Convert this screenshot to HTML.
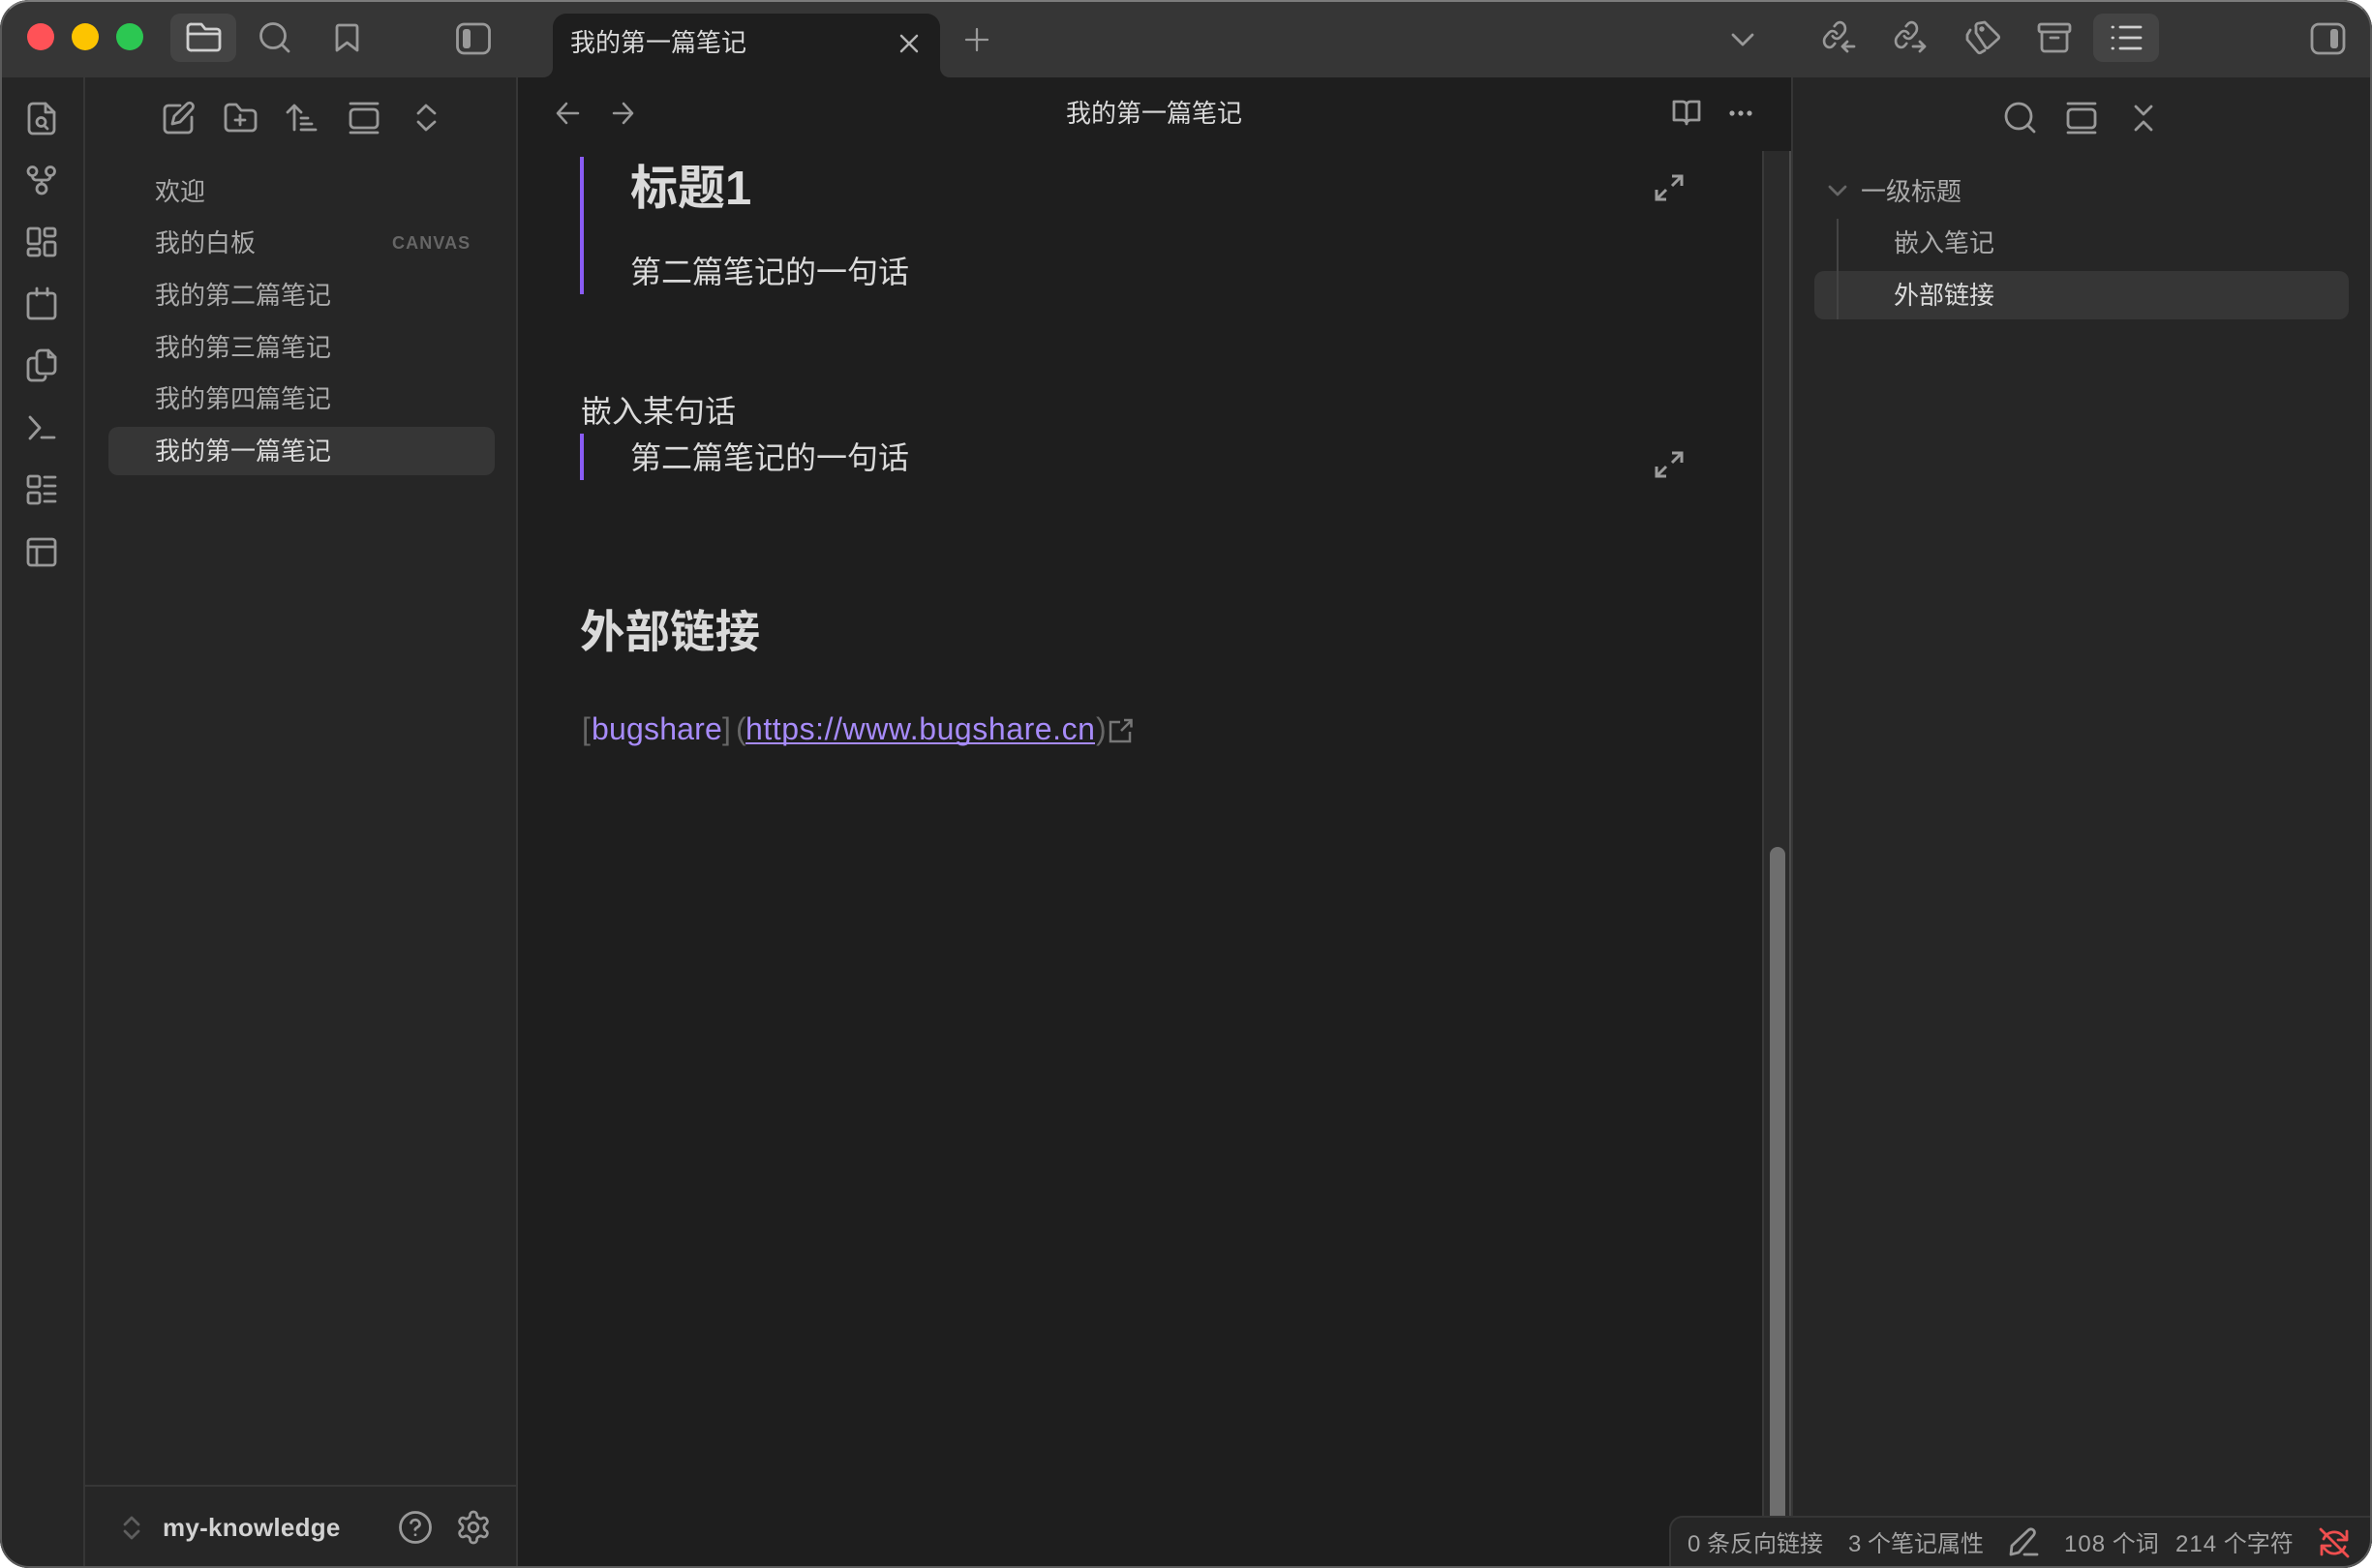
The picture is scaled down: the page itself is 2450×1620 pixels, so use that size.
<!DOCTYPE html>
<html lang="zh-CN">
<head>
<meta charset="utf-8">
<title>我的第一篇笔记</title>
<style>
html,body{margin:0;padding:0;width:2450px;height:1620px;background:#fff;overflow:hidden}
*{box-sizing:border-box}
.win{position:absolute;left:0;top:0;width:2450px;height:1620px;border-radius:30px;overflow:hidden;background:#1e1e1e;font-family:"Liberation Sans","Noto Sans CJK SC",sans-serif}
.b{position:absolute}
.t{position:absolute;white-space:nowrap;line-height:40px;height:40px;font-size:26px;color:#ababab}
.c{font-size:32px;color:#dadada}
.s{font-size:24px;color:#a3a3a3}
.s span{letter-spacing:1px}
.edge{position:absolute;left:0;top:0;width:2450px;height:1620px;border-radius:30px;border:2px solid #5a5a5a;border-top-color:#7c7c7c;pointer-events:none}
svg{position:absolute;left:0;top:0}
.ns *{vector-effect:non-scaling-stroke}
</style>
</head>
<body>
<div class="win">
  <!-- backgrounds -->
  <div class="b" style="left:0;top:0;width:2450px;height:80px;background:#363636"></div>
  <div class="b" style="left:0;top:80px;width:86px;height:1540px;background:#262626"></div>
  <div class="b" style="left:86px;top:80px;width:2px;height:1540px;background:#363636"></div>
  <div class="b" style="left:88px;top:80px;width:445px;height:1540px;background:#262626"></div>
  <div class="b" style="left:533px;top:80px;width:2px;height:1540px;background:#363636"></div>
  <div class="b" style="left:88px;top:1534px;width:445px;height:2px;background:#363636"></div>
  <div class="b" style="left:1850px;top:80px;width:600px;height:1540px;background:#262626"></div>
  <div class="b" style="left:1850px;top:80px;width:2px;height:1540px;background:#363636"></div>
  <!-- tab -->
  <div class="b" style="left:571px;top:14px;width:400px;height:66px;background:#1e1e1e;border-radius:14px 14px 0 0"></div>
  <!-- toolbar active buttons -->
  <div class="b" style="left:176px;top:14px;width:68px;height:50px;background:#444;border-radius:10px"></div>
  <div class="b" style="left:2162px;top:14px;width:68px;height:50px;background:#444;border-radius:10px"></div>
  <!-- traffic lights -->
  <div class="b" style="left:28px;top:24px;width:28px;height:28px;border-radius:50%;background:#ff5257"></div>
  <div class="b" style="left:74px;top:24px;width:28px;height:28px;border-radius:50%;background:#fdc400"></div>
  <div class="b" style="left:120px;top:24px;width:28px;height:28px;border-radius:50%;background:#2cc752"></div>
  <!-- scrollbar -->
  <div class="b" style="left:1820px;top:156px;width:2px;height:1464px;background:#3a3a3a"></div>
  <div class="b" style="left:1822px;top:156px;width:26px;height:1464px;background:#2b2b2b"></div>
  <div class="b" style="left:1848px;top:156px;width:2px;height:1464px;background:#4a4a4a"></div>
  <div class="b" style="left:1828px;top:875px;width:16px;height:745px;background:#6e6e6e;border-radius:8px 8px 0 0"></div>
  <!-- selected rows -->
  <div class="b" style="left:112px;top:441px;width:399px;height:50px;background:#363636;border-radius:10px"></div>
  <div class="b" style="left:1874px;top:280px;width:552px;height:50px;background:#363636;border-radius:10px"></div>
  <div class="b" style="left:1897px;top:226px;width:2px;height:104px;background:#444"></div>
  <!-- quote bars -->
  <div class="b" style="left:599px;top:162px;width:4px;height:142px;background:#8a5cf5"></div>
  <div class="b" style="left:599px;top:448px;width:4px;height:48px;background:#8a5cf5"></div>

  <!-- tab & header text -->
  <div class="t" style="left:589px;top:24px;color:#dadada">我的第一篇笔记</div>
  <div class="t" style="left:1101px;top:97px;color:#dadada">我的第一篇笔记</div>

  <!-- nav text -->
  <div class="t" style="left:160px;top:178px">欢迎</div>
  <div class="t" style="left:160px;top:231px">我的白板</div>
  <div class="t" style="left:405px;top:231px;font-size:18px;font-weight:bold;letter-spacing:1.1px;color:#666">CANVAS</div>
  <div class="t" style="left:160px;top:285px">我的第二篇笔记</div>
  <div class="t" style="left:160px;top:339px">我的第三篇笔记</div>
  <div class="t" style="left:160px;top:392px">我的第四篇笔记</div>
  <div class="t" style="left:160px;top:446px;color:#dadada">我的第一篇笔记</div>
  <div class="t" style="left:168px;top:1558px;font-weight:bold;color:#d2d2d2;letter-spacing:.25px">my-knowledge</div>

  <!-- outline text -->
  <div class="t" style="left:1922px;top:178px">一级标题</div>
  <div class="t" style="left:1956px;top:231px">嵌入笔记</div>
  <div class="t" style="left:1956px;top:285px;color:#dadada">外部链接</div>

  <!-- content -->
  <div class="t" style="left:651px;top:165px;height:60px;line-height:60px;font-size:49px;font-weight:bold;color:#dadada">标题1</div>
  <div class="t c" style="left:651px;top:261px">第二篇笔记的一句话</div>
  <div class="t c" style="left:600px;top:405px">嵌入某句话</div>
  <div class="t c" style="left:651px;top:453px">第二篇笔记的一句话</div>
  <div class="t" style="left:599px;top:623px;height:60px;line-height:60px;font-size:46.500px;font-weight:bold;color:#dadada">外部链接</div>

  <div class="t c" style="left:601px;top:733px;color:#666">[</div>
  <div class="t c" style="left:611px;top:733px;color:#a78bfa;letter-spacing:.2px">bugshare</div>
  <div class="t c" style="left:746px;top:733px;color:#666">]</div>
  <div class="t c" style="left:760px;top:733px;color:#666">(</div>
  <div class="t c" style="left:770px;top:733px;color:#a78bfa;letter-spacing:.56px">https://www.bugshare.cn</div>
  <div class="b" style="left:770px;top:767px;width:361px;height:2px;background:#a78bfa"></div>
  <div class="t c" style="left:1132px;top:733px;color:#666">)</div>

  <!-- status bar -->
  <div class="b" style="left:1724px;top:1566px;width:726px;height:54px;background:#262626;border:2px solid #363636;border-right:0;border-bottom:0;border-radius:14px 0 0 0"></div>
  <div class="t s" style="left:1743px;top:1576px">0 条反向链接</div>
  <div class="t s" style="left:1909px;top:1576px">3 个笔记属性</div>
  <div class="t s" style="left:2132px;top:1576px"><span>108</span> 个词</div>
  <div class="t s" style="left:2247px;top:1576px"><span>214</span> 个字符</div>

  <!-- icons -->
  <svg width="2450" height="1620" viewBox="0 0 2450 1620" fill="none" stroke="#999" stroke-width="2.800" stroke-linecap="round" stroke-linejoin="round">
    <!-- tab inverse corners -->
    <path d="M561 80A10 10 0 0 0 571 70V80Z" fill="#1e1e1e" stroke="none"/>
    <path d="M971 70A10 10 0 0 0 981 80H971Z" fill="#1e1e1e" stroke="none"/>

    <!-- title bar left -->
    <g stroke="#cfcfcf">
      <path d="M198 52H224a3 3 0 0 0 3-3V33a3 3 0 0 0-3-3H212l-4-5H198a3.500 3.500 0 0 0-4 4V48a3.500 3.500 0 0 0 4 4Z"/>
      <path d="M194 35H227"/>
    </g>
    <circle cx="282" cy="37" r="12.500"/>
    <path d="M291 46L298 53"/>
    <path d="M350 26H367a2 2 0 0 1 2 2V52L358.500 44L348 52V28a2 2 0 0 1 2-2Z"/>
    <rect x="472.500" y="25" width="33" height="30" rx="7"/>
    <rect x="478" y="30" width="8" height="20" rx="3" fill="#999" stroke="none"/>

    <!-- tab close / plus -->
    <path d="M931 37L947 53M947 37L931 53" stroke="#b5b5b5" stroke-width="2.500"/>
    <path d="M1009 30V52M998 41H1020" stroke-width="2.300"/>

    <!-- title bar right -->
    <path d="M1790 36L1800 46L1810 36"/>
    <g class="ns" transform="translate(1881.800 20.400) scale(1.1 1.3)" stroke-width="2.600">
      <path d="M10 13a5 5 0 0 0 7.540.54l3-3a5 5 0 0 0-7.070-7.070l-1.720 1.710"/>
      <path d="M14 11a5 5 0 0 0-7.540-.54l-3 3a5 5 0 0 0 7.070 7.070l1.710-1.710"/>
    </g>
    <path d="M1915 48H1903M1908 43L1903 48L1908 53"/>
    <g class="ns" transform="translate(1955.800 20.400) scale(1.1 1.3)" stroke-width="2.600">
      <path d="M10 13a5 5 0 0 0 7.540.54l3-3a5 5 0 0 0-7.070-7.070l-1.720 1.710"/>
      <path d="M14 11a5 5 0 0 0-7.540-.54l-3 3a5 5 0 0 0 7.070 7.070l1.710-1.710"/>
    </g>
    <path d="M1976 48H1988M1983 43L1988 48L1983 53"/>
    <path d="M2041 28a3 3 0 0 1 3-4L2050 23L2064 37a2 2 0 0 1 0 3L2054 49a2 2 0 0 1-3 0L2041 34Z"/>
    <circle cx="2047" cy="30" r="1.300" fill="#999"/>
    <path d="M2035 31L2032 36V41L2043 54a2.500 2.500 0 0 0 3.500 0L2050 52"/>
    <rect x="2106" y="25" width="32" height="8" rx="2"/>
    <path d="M2109 33V50a3 3 0 0 0 3 3H2132a3 3 0 0 0 3-3V33M2118 39H2126"/>
    <g stroke="#d0d0d0">
      <path d="M2190 28H2211M2190 39H2211M2190 50H2211"/>
      <path d="M2182 28H2182.500M2182 39H2182.500M2182 50H2182.500"/>
    </g>
    <rect x="2388" y="25" width="33" height="30" rx="7"/>
    <rect x="2407" y="30" width="8" height="20" rx="3" fill="#999" stroke="none"/>

    <!-- ribbon -->
    <path d="M34 107H47L56 116V134a4 4 0 0 1-4 4H34a4 4 0 0 1-4-4V111a4 4 0 0 1 4-4Z"/>
    <path d="M47 107V116H56"/>
    <circle cx="42.500" cy="126" r="4.500"/>
    <path d="M46 130L49 133"/>

    <circle cx="33.500" cy="177" r="4.500"/>
    <circle cx="52" cy="177" r="4.500"/>
    <circle cx="43" cy="195" r="5"/>
    <path d="M33.500 182a4 4 0 0 0 4 4H48a4 4 0 0 0 4-4M43 186V190"/>

    <rect x="29" y="236" width="12" height="16" rx="2"/>
    <rect x="46" y="236" width="11" height="8" rx="2"/>
    <rect x="29" y="257" width="12" height="7" rx="2"/>
    <rect x="46" y="250" width="11" height="14" rx="2"/>

    <rect x="29" y="303" width="28" height="26" rx="3"/>
    <path d="M38 298V305M49 298V305"/>

    <path d="M42 362H50L57 369V382a4 4 0 0 1-4 4H42a4 4 0 0 1-4-4V366a4 4 0 0 1 4-4Z"/>
    <path d="M50 362V369H57"/>
    <path d="M36 370H33a4 4 0 0 0-4 4V389a4 4 0 0 0 4 4H43a4 4 0 0 0 4-4"/>

    <path d="M31 431L41 442L31 453M43 452H56"/>

    <rect x="29" y="492" width="12" height="11" rx="2"/>
    <rect x="29" y="509" width="12" height="11" rx="2"/>
    <path d="M46 493H57M46 502H57M46 510H57M46 518H57"/>

    <rect x="29" y="557" width="28" height="27" rx="3"/>
    <path d="M29 565H57M38 565V584"/>

    <!-- left sidebar toolbar -->
    <path d="M186 109H174a4 4 0 0 0-4 4V133a4 4 0 0 0 4 4H194a4 4 0 0 0 4-4V121"/>
    <path d="M180 120L193 107.500a3.500 3.500 0 0 1 5.500 5L186 126L178 128Z"/>
    <path d="M237 108H244l5 6H260a4 4 0 0 1 4 4V131a4 4 0 0 1-4 4H237a4 4 0 0 1-4-4V112a4 4 0 0 1 4-4Z"/>
    <path d="M248 119V129M243 124H253"/>
    <path d="M304 134V109M297 116L304 109L311 116M311 122H318M311 128H322M311 134H326"/>
    <path d="M362 107H390M362 137H390"/>
    <rect x="362" y="113" width="28" height="19" rx="4"/>
    <path d="M432 117L440 109L449 117M432 126L440 134L449 126"/>

    <!-- view header -->
    <path d="M597 117H576M585 107L576 117L585 127" stroke-width="2.500"/>
    <path d="M634 117H653M644 107L653 117L644 127" stroke-width="2.500"/>
    <path d="M1729 105H1738a4 4 0 0 1 4 4a4 4 0 0 1 4-4H1755V124H1746a4 4 0 0 0-4 4a4 4 0 0 0-4-4H1729ZM1742 109V128"/>
    <g fill="#a8a8a8" stroke="none">
      <circle cx="1789" cy="117" r="2.600"/><circle cx="1798" cy="117" r="2.600"/><circle cx="1807" cy="117" r="2.600"/>
    </g>

    <!-- expand icons -->
    <g stroke="#9c9c9c" stroke-width="3" stroke-linecap="butt" stroke-linejoin="miter">
      <path d="M1727 182H1737V192M1737 182L1727 192M1711 196V206H1721M1711 206L1721 196"/>
      <path d="M1727 468H1737V478M1737 468L1727 478M1711 482V492H1721M1711 492L1721 482"/>
    </g>

    <!-- right sidebar toolbar -->
    <circle cx="2085" cy="120" r="13"/>
    <path d="M2094 129L2101 136"/>
    <path d="M2136 107H2164M2136 137H2164"/>
    <rect x="2136" y="113" width="28" height="19" rx="4"/>
    <path d="M2206 110L2214 118L2222 110M2206 134L2214 126L2222 134"/>
    <path d="M1890 193L1898 201L1906 193" stroke="#666"/>

    <!-- external link -->
    <path d="M1157 746H1147V766H1167V756M1158 755L1168 745M1161 744H1168.500V751.500" stroke="#777" stroke-width="2.500" stroke-linecap="butt" stroke-linejoin="miter"/>

    <!-- vault footer -->
    <path d="M129 1575L136 1568L143 1575M129 1582L136 1589L143 1582" stroke="#5e5e5e"/>
    <g transform="translate(410.400 1559.400) scale(1.55)" stroke-width="1.800">
      <circle cx="12" cy="12" r="10"/>
      <path d="M9.090 9a3 3 0 0 1 5.830 1c0 2-3 2-3 3.500M12 17h.01"/>
    </g>
    <g transform="translate(469.800 1558.800) scale(1.6)" stroke-width="1.700">
      <path d="M12.220 2h-.44a2 2 0 0 0-2 2v.18a2 2 0 0 1-1 1.730l-.43.25a2 2 0 0 1-2 0l-.15-.08a2 2 0 0 0-2.730.73l-.22.38a2 2 0 0 0 .73 2.730l.15.1a2 2 0 0 1 1 1.720v.51a2 2 0 0 1-1 1.740l-.15.09a2 2 0 0 0-.73 2.730l.22.38a2 2 0 0 0 2.730.73l.15-.08a2 2 0 0 1 2 0l.43.25a2 2 0 0 1 1 1.730V20a2 2 0 0 0 2 2h.44a2 2 0 0 0 2-2v-.18a2 2 0 0 1 1-1.730l.43-.25a2 2 0 0 1 2 0l.15.08a2 2 0 0 0 2.730-.73l.22-.39a2 2 0 0 0-.73-2.730l-.15-.08a2 2 0 0 1-1-1.740v-.5a2 2 0 0 1 1-1.740l.15-.09a2 2 0 0 0 .73-2.730l-.22-.38a2 2 0 0 0-2.730-.73l-.15.08a2 2 0 0 1-2 0l-.43-.25a2 2 0 0 1-1-1.730V4a2 2 0 0 0-2-2z"/>
      <circle cx="12" cy="12" r="3"/>
    </g>

    <!-- status icons -->
    <path d="M2078 1597L2095 1581a3.500 3.500 0 0 1 5.500 5L2085 1604L2077 1606Z"/>
    <path d="M2091 1606H2104"/>
    <g stroke="#f04f4f">
      <path d="M2397 1580L2425 1608"/>
      <path d="M2400 1590A12 12 0 0 1 2420 1587L2424 1591M2424 1582V1591H2415"/>
      <path d="M2422 1598A12 12 0 0 1 2402 1601L2398 1597M2398 1606V1597H2407"/>
    </g>
  </svg>
  <div class="edge"></div>
</div>
</body>
</html>
